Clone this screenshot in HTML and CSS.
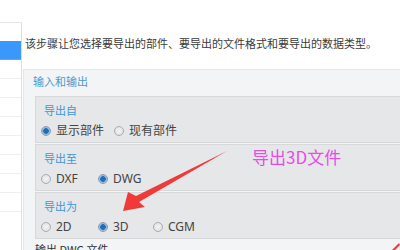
FILE: index.html
```html
<!DOCTYPE html>
<html lang="zh-CN">
  <head>
    <meta charset="UTF-8" />
    <title>导出</title>
    <link rel="stylesheet" href="styles.css">
  </head>
  <body>
    <div class="sidebar">
      <div class="row"></div>
      <div class="row selected"></div>
      <div class="row"></div>
      <div class="row"></div>
      <div class="row"></div>
      <div class="row"></div>
      <div class="row"></div>
      <div class="row"></div>
      <div class="row"></div>
      <div class="row"></div>
    </div>

    <div class="main">
      <p class="intro">该步骤让您选择要导出的部件、要导出的文件格式和要导出的数据类型。</p>

      <div class="group">
        <div class="group-title">输入和输出</div>

        <div class="section">
          <div class="section-title">导出自</div>
          <div class="options">
            <span class="opt wide"><i class="radio checked"></i>显示部件</span>
            <span class="opt"><i class="radio"></i>现有部件</span>
          </div>
        </div>

        <div class="section">
          <div class="section-title">导出至</div>
          <div class="options">
            <span class="opt"><i class="radio"></i>DXF</span>
            <span class="opt"><i class="radio checked"></i>DWG</span>
          </div>
        </div>

        <div class="section">
          <div class="section-title">导出为</div>
          <div class="options">
            <span class="opt"><i class="radio"></i>2D</span>
            <span class="opt short"><i class="radio checked"></i>3D</span>
            <span class="opt"><i class="radio"></i>CGM</span>
          </div>
        </div>

        <div class="footer-text">输出 DWG 文件</div>
      </div>
    </div>

    <div class="note">导出3D文件</div>
    <svg class="arrow" width="400" height="250" viewBox="0 0 400 250">
      <polygon points="123,211 128,192 136,196 227,151 139,202 145,207" fill="#f03a3a" />
      <polygon points="392,250 399,243 400,245 395,250" fill="#f03a3a" />
    </svg>
  </body>
</html>
```

FILE: styles.css
```css
body {
  margin: 0;
  padding: 0;
  display: flex;
  width: 400px;
  height: 250px;
  overflow: hidden;
  background: #fff;
  font-family: "Noto Sans", "Noto Sans CJK SC", sans-serif;
  font-size: 11px;
  color: #333;
}

.sidebar {
  width: 21px;
  margin-top: 22px;
  border-top: 1px solid #e6e6e6;
  border-right: 1px solid #dedede;
  background: #fff;
  flex-shrink: 0;
}
.row {
  height: 18px;
  border-bottom: 1px solid #efefef;
}
.row:first-child {
  border-bottom: none;
}
.row.selected {
  background: #3a98fb;
  border-bottom: 1px solid #5aa8fb;
}

.main {
  flex: 1;
  min-width: 0;
  padding-left: 1px;
}

.intro {
  margin: 36px 0 0 2px;
  line-height: 14px;
  white-space: nowrap;
  font-family: "Noto Sans CJK SC", sans-serif;
  color: #3a3a3a;
}

.group {
  margin-top: 19px;
  background: #f2f4f5;
  border-top: 1px solid #e4e6e8;
  border-left: 1px solid #e4e6e8;
  padding: 0 0 0 11px;
}
.group-title {
  height: 26px;
  line-height: 22px;
  margin-left: -2px;
  color: #4b9ad2;
  font-family: "Noto Sans CJK SC", sans-serif;
}

.section {
  height: 34px;
  background: #e6e7e9;
  border: 1px solid #d6d8da;
  border-right: none;
  padding: 6px 0 5px 5px;
  margin-bottom: 1px;
}
.section-title {
  padding-left: 3px;
  line-height: 14px;
  color: #3f97d3;
  font-family: "Noto Sans CJK SC", sans-serif;
}
.options {
  display: flex;
  align-items: center;
  margin-top: 7px;
  line-height: 14px;
  color: #444;
  white-space: nowrap;
}
.opt {
  display: flex;
  align-items: center;
  flex-shrink: 0;
  width: 57px;
  font-size: 12px;
}
.opt.wide {
  width: 73px;
}
.opt.short {
  width: 55px;
}

.radio {
  width: 8px;
  height: 8px;
  margin-right: 5px;
  border: 1px solid #a9acb0;
  border-radius: 50%;
  background: radial-gradient(circle, #f4f4f4 0%, #dcdde0 100%);
  box-sizing: content-box;
  flex-shrink: 0;
}
.radio.checked {
  background: radial-gradient(circle, #1f6fb8 0 2.5px, #7fb3df 3px, #d6dde4 5px);
  border-color: #8a9ab0;
}

.footer-text {
  margin-top: 3px;
  line-height: 14px;
  color: #333;
  font-family: "Noto Sans CJK SC", sans-serif;
}

.note {
  position: absolute;
  left: 252px;
  top: 147px;
  font-family: "Noto Sans CJK SC", sans-serif;
  font-size: 17px;
  line-height: 20px;
  color: #e64ce6;
}
.arrow {
  position: absolute;
  left: 0;
  top: 0;
}
```
